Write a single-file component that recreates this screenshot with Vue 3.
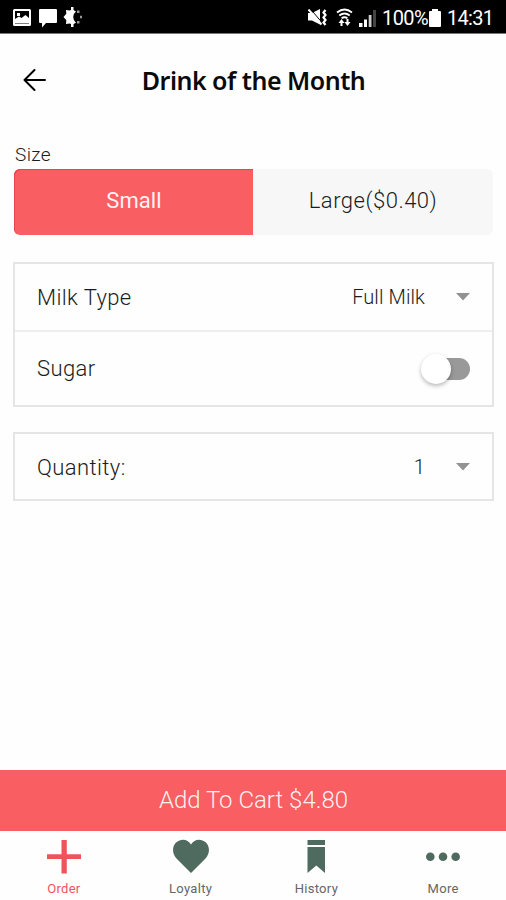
<script setup>
import { ref } from 'vue'

const sizes = [
  { id: 'small', label: 'Small' },
  { id: 'large', label: 'Large($0.40)' },
]
const size = ref('small')
const sugar = ref(false)
const tabs = [
  { id: 'order', label: 'Order' },
  { id: 'loyalty', label: 'Loyalty' },
  { id: 'history', label: 'History' },
  { id: 'more', label: 'More' },
]
const activeTab = ref('order')
</script>

<template>
  <div class="screen">
    <div class="status">
      <div class="status-left">
        <svg width="18" height="17" viewBox="0 0 18 17">
          <path fill="#fff" fill-rule="evenodd" d="M1.500 0h15Q18 0 18 1.500v14Q18 17 16.500 17h-15Q0 17 0 15.500v-14Q0 0 1.500 0zM2 2v12.500h14V2z" />
          <path fill="#fff" d="M2 13V10l4-2.500 2.500 1.500L12.500 6l3.500 3v5H2zM4 4h3v3H4z" />
        </svg>
        <svg width="18" height="19" viewBox="0 0 18 19">
          <path fill="#fff" d="M1 0h16q1 0 1 1v12q0 1-1 1H7l-4 4.500V14H1q-1 0-1-1V1q0-1 1-1z" />
        </svg>
        <svg width="20" height="20" viewBox="0 0 20 20">
          <path fill="#fff" d="M13 4.500a7 7 0 0 0 0 11.200L9.500 17.500 6.500 16.500 3 17l.3-3.700L.5 10l2.800-3.300L3 3l3.500.5L9.500 2.500z" />
          <path fill="#fff" d="M8 0h2.500v4H8zM8 16h2.500v4H8z" />
          <path fill="#999" d="M14 3.500h2.500V6H14zM17 8.800h2v2.400h-2zM14 14h2.500v2.500H14z" />
        </svg>
      </div>
      <div class="status-right">
        <svg class="mute" width="19" height="17" viewBox="0 0 19 17">
          <path fill="#fff" d="M0 4h4l8-4v15.500l-8-4H0z" />
          <path stroke="#000" stroke-width="1" d="M2.500 0l11 13" />
          <path stroke="#fff" stroke-width="2" d="M.5.5l13 15" />
          <path fill="none" stroke="#fff" stroke-width="2.200" d="M17.500 1L15.500 3.500 17.500 6 15.500 8.500l2 2.500-2 2.500 2 2.500" />
        </svg>
        <svg class="wifi" width="17" height="18" viewBox="0 0 17 18">
          <path fill="none" stroke="#fff" stroke-width="1.900" d="M1 4.500q7.500-6 15 0M3.300 7.500q5.200-4 10.400 0M5.600 10.300q2.900-2.200 5.800 0" />
          <path fill="#fff" d="M5.500 11l3 4h-2v3h-2v-3H2.500zM11.500 18l-3-4h2v-3h2v3h2z" />
        </svg>
        <svg class="signal" width="17" height="17" viewBox="0 0 17 17">
          <path fill="#fff" d="M0 13h3.500v4H0zM5 9.500h3v7.500H5z" />
          <path fill="#ccc" d="M9.700 5h2.800v12H9.700z" />
          <path fill="#444" d="M14 0h3v17h-3z" />
        </svg>
        <span class="percent">100%</span>
        <svg class="battery" width="12" height="18" viewBox="0 0 12 18">
          <path fill="#fff" d="M3 0h6v2h2q1 0 1 1v14q0 1-1 1H1q-1 0-1-1V3q0-1 1-1h2z" />
        </svg>
        <span class="clock">14:31</span>
      </div>
    </div>

    <header class="header">
      <svg class="back" width="24" height="22" viewBox="0 0 24 22">
        <path fill="none" stroke="#000" stroke-width="2" stroke-linecap="round" stroke-linejoin="round" d="M11.500 1L1.500 11l10 10M1.500 11H22" />
      </svg>
      <h1 class="title">Drink of the Month</h1>
    </header>

    <main class="content">
      <div class="size-label">Size</div>
      <div class="segments">
        <button
          v-for="s in sizes"
          :key="s.id"
          class="segment"
          :class="[s.id, { selected: s.id === size }]"
          @click="size = s.id"
        >{{ s.label }}</button>
      </div>

      <section class="card options">
        <div class="row milk">
          <span class="label">Milk Type</span>
          <span class="value">Full Milk</span>
          <svg class="caret" width="14" height="8" viewBox="0 0 14 8"><path fill="#929292" d="M0 0h14L7 7.500z" /></svg>
        </div>
        <div class="row sugar">
          <span class="label">Sugar</span>
          <button class="switch" :class="{ on: sugar }" aria-label="Sugar" @click="sugar = !sugar">
            <i class="knob"></i>
          </button>
        </div>
      </section>

      <section class="card">
        <div class="row quantity">
          <span class="label">Quantity:</span>
          <span class="value">1</span>
          <svg class="caret" width="14" height="8" viewBox="0 0 14 8"><path fill="#929292" d="M0 0h14L7 7.500z" /></svg>
        </div>
      </section>
    </main>

    <button class="cart">Add To Cart $4.80</button>

    <nav class="tabs">
      <button
        v-for="t in tabs"
        :key="t.id"
        class="tab"
        :class="[t.id, { active: t.id === activeTab }]"
        @click="activeTab = t.id"
      >
        <svg width="38" height="36" viewBox="0 0 38 36">
          <path v-if="t.id === 'order'" fill="currentColor" d="M16.500 1h5.300v14.200H36v4.800H21.800v14.500h-5.300V20H2v-4.800h14.500z" />
          <path v-else-if="t.id === 'loyalty'" fill="currentColor" d="M19 34L4 19C-1 13 .5 4 7.500 1.500 12-.2 16.500 1.500 19 5.500 21.500 1.500 26-.2 30.500 1.500 37.500 4 39 13 34 19z" />
          <path v-else-if="t.id === 'history'" fill="currentColor" d="M10.500 1h17.500v5H10.500zM10.500 8h17.500v26l-8.700-7.500-8.800 7.500z" />
          <g v-else fill="currentColor">
            <circle cx="6.300" cy="17.800" r="4.300" />
            <circle cx="19" cy="17.800" r="4.300" />
            <circle cx="31.700" cy="17.800" r="4.300" />
          </g>
        </svg>
        <span class="tab-label">{{ t.label }}</span>
      </button>
    </nav>
  </div>
</template>

<style>
body {
  background: #fefefe;
}
</style>

<style scoped>
.screen {
  display: flex;
  flex-direction: column;
  width: 506px;
  height: 900px;
  overflow: hidden;
  background: #fefefe;
  color: #1c1c1c;
  font-family: Roboto, "Liberation Sans", sans-serif;
}
button {
  display: block;
  margin: 0;
  padding: 0;
  border: 0;
  background: none;
  font: inherit;
  color: inherit;
}
svg {
  display: block;
  flex: none;
}
.status {
  display: flex;
  justify-content: space-between;
  height: 34px;
  box-sizing: border-box;
  background: #000;
  border-bottom: 1px solid #777;
  color: #fff;
}
.status-left {
  display: flex;
  gap: 8px;
  padding: 9px 0 0 13px;
}
.status-left svg:nth-child(3) {
  margin: -2px 0 0 -2px;
}
.status-right {
  display: flex;
  align-items: flex-start;
  padding-right: 13px;
}
.mute { margin: 9px 9px 0 0; }
.wifi { margin: 8px 6px 0 0; }
.signal { margin: 10px 6px 0 0; }
.battery { margin: 9px 6px 0 0; }
.percent,
.clock {
  font-size: 20px;
  line-height: 36px;
  white-space: nowrap;
}
.percent {
  width: 47px;
  letter-spacing: -0.6px;
}
.clock {
  width: 46px;
  letter-spacing: -0.7px;
}
.header {
  display: flex;
  align-items: center;
  height: 92px;
}
.back {
  margin-left: 23px;
}
.title {
  flex: 1;
  margin: 0 46px 1px 0;
  font-family: "Noto Sans", Roboto, sans-serif;
  font-size: 25px;
  font-weight: 600;
  line-height: 36px;
  letter-spacing: -0.5px;
  text-align: center;
  color: #0a0a0a;
  white-space: nowrap;
}
.content {
  flex: 1;
  padding: 0 12px 0 13px;
}
.size-label {
  height: 43px;
  padding: 18px 0 0 2px;
  box-sizing: border-box;
  font-size: 19px;
  line-height: 22px;
  font-weight: 350;
  letter-spacing: 0.4px;
}
.segments {
  display: flex;
  margin: 0 1px;
}
.segment {
  width: 240px;
  height: 66px;
  padding-bottom: 4px;
  font-size: 22px;
  font-weight: 350;
  letter-spacing: 0.5px;
  background: #f7f7f7;
}
.segment.small {
  width: 239px;
  border-radius: 6px 0 0 6px;
}
.segment.large { border-radius: 0 6px 6px 0; }
.segment.selected {
  background: #f85e62;
  box-shadow: inset 1px 1px 0 #e8444c;
  color: #fff3f3;
  font-weight: 400;
  letter-spacing: 0.1px;
  padding-left: 1px;
}
.card {
  margin-top: 27px;
  border: 2px solid #e5e5e5;
}
.card + .card {
  margin-top: 25px;
}
.row {
  display: flex;
  align-items: center;
  box-sizing: border-box;
  padding: 0 22px 0 22px;
  font-size: 22px;
  font-weight: 350;
  letter-spacing: 0.4px;
}
.label {
  flex: 1;
}
.value {
  margin-right: 31px;
  font-size: 20px;
  letter-spacing: 0.1px;
}
.milk {
  height: 68px;
  border-bottom: 2px solid #eee;
}
.sugar { height: 73px; }
.quantity {
  height: 65px;
  padding-top: 1px;
}
.switch {
  display: flex;
  align-items: center;
  width: 44px;
  height: 22px;
  border-radius: 11px;
  background: #999;
}
.knob {
  width: 30px;
  height: 30px;
  margin-left: -5px;
  flex: none;
  border-radius: 50%;
  background: #fff;
  box-shadow: 0 2px 4px rgba(0, 0, 0, 0.28);
}
.switch.on .knob { margin-left: 19px; }
.cart {
  height: 61px;
  padding: 0 0 2px 1px;
  background: #f85e62;
  color: #fff0f0;
  font-size: 24px;
  font-weight: 300;
}
.tabs {
  display: flex;
  height: 69px;
}
.tab {
  display: flex;
  flex: 1;
  flex-direction: column;
  align-items: center;
  padding: 8px 0 0 1px;
  color: #4f6a5e;
}
.tab.history {
  padding-left: 0;
}
.tab.active { color: #f0545b; }
.tab-label {
  margin-top: 6px;
  font-size: 13px;
  line-height: 16px;
  letter-spacing: 0.3px;
  color: #666;
}
.active .tab-label { color: #f0545b; }
</style>
